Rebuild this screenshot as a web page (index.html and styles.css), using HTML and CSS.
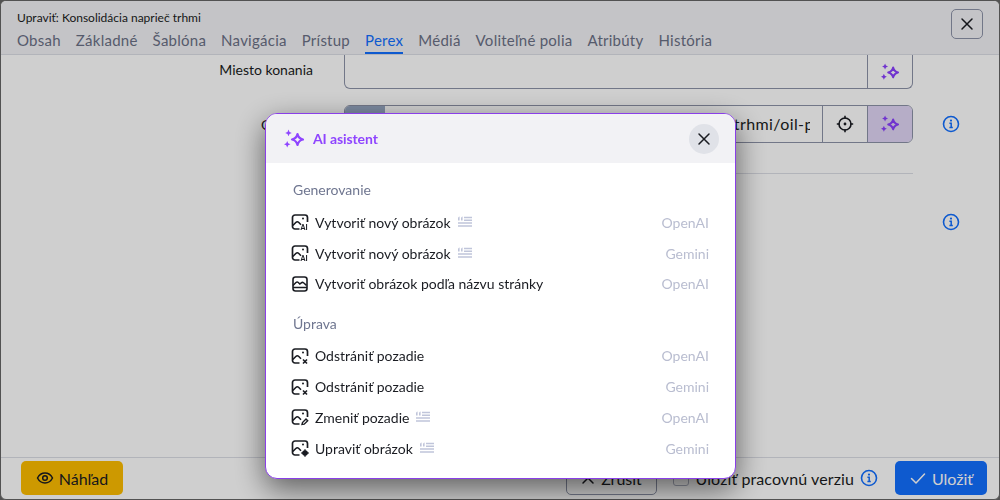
FILE: index.html
```html
<!DOCTYPE html>
<html>
<head>
  <title>Upraviť: Konsolidácia naprieč trhmi</title>
  <link rel="stylesheet" href="styles.css">
</head>
<body>
  <!-- Icon sprite -->
  <svg class="sprite" xmlns="http://www.w3.org/2000/svg">
    <symbol id="i-sparkle" viewBox="0 0 20 20">
      <path d="M13.500 5Q14.500 9.500 19 10.500 14.500 11.500 13.500 16 12.500 11.500 8 10.500 12.500 9.500 13.500 5z" fill="none" stroke="currentColor" stroke-width="2.200" stroke-linejoin="round"/>
      <path d="M4.500 .6l1 2.300 2.300 1-2.300 1-1 2.300-1-2.300-2.300-1 2.300-1zM3.200 12l1 2.300 2.300 1-2.300 1-1 2.300-1-2.300-2.300-1 2.300-1z" fill="currentColor"/>
    </symbol>
    <symbol id="i-close" viewBox="0 0 16 16">
      <path d="M3 3l10 10M13 3L3 13" fill="none" stroke="currentColor" stroke-width="1.500" stroke-linecap="round"/>
    </symbol>
    <symbol id="i-info" viewBox="0 0 18 18">
      <circle cx="9" cy="9" r="7.500" fill="none" stroke="currentColor" stroke-width="1.600"/>
      <circle cx="9" cy="5.600" r="1.100" fill="currentColor"/>
      <path d="M7.400 8.200H9.200V12.500M7.400 12.600h3.400" fill="none" stroke="currentColor" stroke-width="1.500"/>
    </symbol>
    <symbol id="i-target" viewBox="0 0 18 18">
      <circle cx="9" cy="9" r="6" fill="none" stroke="currentColor" stroke-width="1.600"/>
      <circle cx="9" cy="9" r="1.400" fill="currentColor"/>
      <path d="M9 .8v3M9 14.200v3M.8 9h3M14.200 9h3" stroke="currentColor" stroke-width="1.600"/>
    </symbol>
    <symbol id="i-quote" viewBox="0 0 16 12">
      <path d="M1 4.500V2.500C1 1.500 1.500 1 2.600 .6v3.900zM4 4.500V2.500C4 1.500 4.500 1 5.600 .6v3.900z" fill="currentColor"/>
      <path d="M7 1.500h8M7 4.200h8M1 7h14M1 10h14" stroke="currentColor" stroke-width="1.400"/>
    </symbol>
    <symbol id="i-image" viewBox="0 0 18 18">
      <path d="M8.500 16H4a2.500 2.500 0 0 1-2.500-2.500v-9A2.500 2.500 0 0 1 4 2h10a2.500 2.500 0 0 1 2.500 2.500V9" fill="none" stroke="currentColor" stroke-width="1.700"/>
      <path d="M1.800 12.500l3-3c1-1 2-1 3 0l2.200 2.200" fill="none" stroke="currentColor" stroke-width="1.600"/>
      <circle cx="12" cy="5.500" r="1" fill="currentColor"/>
    </symbol>
  </svg>

  <!-- Edit window behind the dialog -->
  <div class="editor">
    <header class="editor-head">
      <div class="head-text">
        <div class="editor-title">Upraviť: Konsolidácia naprieč trhmi</div>
        <nav class="tabs">
          <a>Obsah</a>
          <a>Základné</a>
          <a>Šablóna</a>
          <a>Navigácia</a>
          <a>Prístup</a>
          <a class="active">Perex</a>
          <a>Médiá</a>
          <a>Voliteľné polia</a>
          <a>Atribúty</a>
          <a>História</a>
        </nav>
      </div>
      <button class="btn-close"><svg class="icon-16"><use href="#i-close"/></svg></button>
    </header>

    <main class="editor-body">
      <div class="field field-first">
        <label>Miesto konania</label>
        <div class="input-group cut-top">
          <div class="input-text"></div>
          <button class="addon magic"><svg class="icon-18"><use href="#i-sparkle"/></svg></button>
        </div>
        <span class="field-info"></span>
      </div>

      <div class="field field-image">
        <label>Obrázok</label>
        <div class="input-group">
          <span class="prefix"></span>
          <div class="input-text"><span class="path">/images/perex/konsolidacia-naprieč-trhmi/oil-price</span></div>
          <button class="addon"><svg class="icon-18"><use href="#i-target"/></svg></button>
          <button class="addon magic on"><svg class="icon-18"><use href="#i-sparkle"/></svg></button>
        </div>
        <svg class="field-info icon-18"><use href="#i-info"/></svg>
      </div>

      <div class="field field-rule">
        <span></span>
        <hr>
        <span class="field-info"></span>
      </div>

      <div class="field field-last">
        <span></span>
        <span></span>
        <svg class="field-info icon-18"><use href="#i-info"/></svg>
      </div>
    </main>

    <footer class="editor-foot">
      <button class="btn btn-preview"><svg class="icon-18" viewBox="0 0 18 18"><path d="M1.500 9C3.200 5.700 5.800 4 9 4s5.800 1.700 7.500 5c-1.700 3.300-4.300 5-7.500 5S3.200 12.300 1.500 9z" fill="none" stroke="currentColor" stroke-width="1.500"/><circle cx="9" cy="9" r="2.300" fill="none" stroke="currentColor" stroke-width="1.500"/></svg>Náhľad</button>
      <div class="foot-right">
        <button class="btn btn-cancel"><svg class="icon-16"><use href="#i-close"/></svg>Zrušiť</button>
        <label class="check"><span class="check-box"></span>Uložiť pracovnú verziu</label>
        <svg class="icon-18 info-blue"><use href="#i-info"/></svg>
        <button class="btn btn-save"><svg class="icon-18" viewBox="0 0 18 18"><path d="M2.500 9.500l4.500 4.500 8.500-9" fill="none" stroke="currentColor" stroke-width="1.500" stroke-linecap="round" stroke-linejoin="round"/></svg>Uložiť</button>
      </div>
    </footer>
  </div>

  <!-- AI assistant dialog -->
  <div class="backdrop">
    <section class="dialog">
      <div class="dialog-head">
        <svg class="icon-20"><use href="#i-sparkle"/></svg>
        <h2>AI asistent</h2>
        <button class="dialog-close"><svg class="icon-16"><use href="#i-close"/></svg></button>
      </div>
      <div class="dialog-body">
        <h3>Generovanie</h3>
        <ul class="actions">
          <li>
            <svg class="icon-18" viewBox="0 0 18 18"><use href="#i-image" width="18" height="18"/><text x="9.500" y="16.800" class="badge-text">AI</text></svg>
            <span>Vytvoriť nový obrázok</span>
            <svg class="quote"><use href="#i-quote"/></svg>
            <em>OpenAI</em>
          </li>
          <li>
            <svg class="icon-18" viewBox="0 0 18 18"><use href="#i-image" width="18" height="18"/><text x="9.500" y="16.800" class="badge-text">AI</text></svg>
            <span>Vytvoriť nový obrázok</span>
            <svg class="quote"><use href="#i-quote"/></svg>
            <em>Gemini</em>
          </li>
          <li>
            <svg class="icon-18" viewBox="0 0 18 18"><rect x="2" y="2" width="14" height="14" rx="2.500" fill="none" stroke="currentColor" stroke-width="1.600"/><path d="M2 10.500l3-3c.8-.8 1.500-.8 2.300 0l1.500 1.500 1.500-1.200c.8-.6 1.500-.6 2.200 0l3 2.500M2 12.500h14" fill="none" stroke="currentColor" stroke-width="1.500"/></svg>
            <span>Vytvoriť obrázok podľa názvu stránky</span>
            <em>OpenAI</em>
          </li>
        </ul>

        <h3>Úprava</h3>
        <ul class="actions">
          <li>
            <svg class="icon-18" viewBox="0 0 18 18"><use href="#i-image" width="18" height="18"/><path d="M12 12.500l4 4M16 12.500l-4 4" stroke="currentColor" stroke-width="1.600"/></svg>
            <span>Odstrániť pozadie</span>
            <em>OpenAI</em>
          </li>
          <li>
            <svg class="icon-18" viewBox="0 0 18 18"><use href="#i-image" width="18" height="18"/><path d="M12 12.500l4 4M16 12.500l-4 4" stroke="currentColor" stroke-width="1.600"/></svg>
            <span>Odstrániť pozadie</span>
            <em>Gemini</em>
          </li>
          <li>
            <svg class="icon-18" viewBox="0 0 18 18"><use href="#i-image" width="18" height="18"/><path d="M11 16.500l.5-2 3.500-3.500 1.700 1.700-3.500 3.500z" fill="none" stroke="currentColor" stroke-width="1.400"/></svg>
            <span>Zmeniť pozadie</span>
            <svg class="quote"><use href="#i-quote"/></svg>
            <em>OpenAI</em>
          </li>
          <li>
            <svg class="icon-18" viewBox="0 0 18 18"><use href="#i-image" width="18" height="18"/><circle cx="14" cy="14" r="2.800" fill="currentColor"/><path d="M14 10.300v7.400M10.300 14h7.400" stroke="currentColor" stroke-width="1.300"/></svg>
            <span>Upraviť obrázok</span>
            <svg class="quote"><use href="#i-quote"/></svg>
            <em>Gemini</em>
          </li>
        </ul>
      </div>
    </section>
  </div>
</body>
</html>
```

FILE: styles.css
```css
* {
  box-sizing: border-box;
}

html,
body {
  height: 100%;
}

body {
  margin: 0;
  background-color: #666;
  font-family: "Lato", sans-serif;
  font-size: 14px;
  color: #1a1c22;
  overflow: hidden;
}

button {
  font: inherit;
  color: inherit;
  cursor: pointer;
}

.sprite {
  display: none;
}

.icon-16 {
  width: 16px;
  height: 16px;
}

.icon-18 {
  width: 18px;
  height: 18px;
}

.icon-20 {
  width: 20px;
  height: 20px;
}

/* Edit window */
.editor {
  height: 500px;
  display: flex;
  flex-direction: column;
  background-color: #fff;
  border: 1px solid #666;
  border-radius: 6px;
  overflow: hidden;
}

.editor-head {
  height: 54px;
  flex: none;
  display: flex;
  justify-content: space-between;
  padding: 8px 16px 0;
  background-color: #f2f2f5;
  border-bottom: 1px solid #dcdee6;
}

.editor-title {
  font-size: 12px;
  line-height: 18px;
}

.tabs {
  display: flex;
  gap: 15px;
  margin-top: 2px;
}

.tabs a {
  font-size: 15px;
  letter-spacing: 0.25px;
  line-height: 22px;
  height: 25px;
  color: #6b7086;
}

.tabs a.active {
  color: #126fff;
  border-bottom: 2px solid #126fff;
}

.btn-close {
  width: 32px;
  height: 30px;
  display: flex;
  align-items: center;
  justify-content: center;
  background: none;
  border: 1px solid #8d93a8;
  border-radius: 5px;
}

.editor-body {
  flex: 1;
  padding-right: 30px;
  overflow: hidden;
}

.field {
  display: grid;
  grid-template-columns: 312px 569px 56px;
  column-gap: 31px;
  align-items: center;
}

.field label {
  text-align: right;
}

.field-info {
  margin-left: -2px;
  color: #126fff;
  justify-self: start;
}

.field-first {
  height: 34px;
}

.field-first label {
  margin-bottom: 6px;
}

.field-image {
  margin-top: 16px;
}

.field-rule {
  margin-top: 30px;
}

.field-rule hr {
  width: 100%;
  margin: 0;
  border: 0;
  border-top: 1px solid #dcdee6;
}

.field-last {
  margin-top: 39px;
}

.input-group {
  height: 38px;
  display: flex;
  border: 1px solid #8d93a8;
  border-radius: 6px;
  overflow: hidden;
}

.input-group.cut-top {
  height: 34px;
  border-top: 0;
  border-top-left-radius: 0;
  border-top-right-radius: 0;
}

.prefix {
  width: 40px;
  flex: none;
  background-color: #98a9c4;
}

/* the value is longer than the box, only its tail shows */
.input-text {
  flex: 1;
  min-width: 0;
  display: flex;
  justify-content: flex-end;
  margin-right: 12px;
  line-height: 36px;
  font-size: 16px;
  white-space: nowrap;
  overflow: hidden;
}

.path {
  flex: none;
  margin-right: -31px;
  letter-spacing: 0.4px;
}

.addon {
  width: 45px;
  flex: none;
  display: flex;
  align-items: center;
  justify-content: center;
  padding: 0;
  background: none;
  border: 0;
  border-left: 1px solid #8d93a8;
}

.magic {
  color: #8a3fff;
}

.magic.on {
  background-color: #e0d5f5;
}

/* Footer */
.editor-foot {
  height: 42px;
  flex: none;
  display: flex;
  justify-content: space-between;
  align-items: flex-start;
  padding: 3px 12px 0 20px;
  border-top: 1px solid #dcdee6;
}

.foot-right {
  display: flex;
  align-items: center;
}

.btn {
  height: 34px;
  display: flex;
  align-items: center;
  justify-content: center;
  gap: 5px;
  font-size: 16px;
  border: 0;
  border-radius: 5px;
}

.btn-preview {
  width: 102px;
  background-color: #fdbd00;
}

.btn-cancel {
  width: 91px;
  background: none;
  border: 1px solid #8d93a8;
}

.btn-save {
  width: 92px;
  margin-left: 17px;
  background-color: #126fff;
  color: #fff;
}

.check {
  display: flex;
  align-items: center;
  gap: 7px;
  margin-left: 16px;
  font-size: 16px;
  letter-spacing: 0.1px;
}

.check-box {
  width: 16px;
  height: 16px;
  border: 1px solid #aeb2c2;
  border-radius: 3px;
}

.info-blue {
  margin-left: 6px;
  color: #126fff;
}

/* Dialog */
.backdrop {
  position: fixed;
  inset: 0;
  padding: 113px 0 0 265px;
  background-color: rgba(0, 0, 0, 0.19);
}

.dialog {
  width: 471px;
  height: 366px;
  background-color: #fff;
  border: 1px solid #8a3fe8;
  border-radius: 12px;
  box-shadow: 0 10px 30px rgba(0, 0, 0, 0.55);
  overflow: hidden;
}

.dialog-head {
  height: 49px;
  display: flex;
  align-items: center;
  gap: 9px;
  padding: 0 16px 0 18px;
  background-color: #f2f2f5;
  color: #8f45ff;
}

.dialog-head h2 {
  flex: 1;
  margin: 0;
  padding-bottom: 1px;
  font-size: 14px;
  font-weight: 700;
  letter-spacing: -0.1px;
}

.dialog-close {
  width: 30px;
  height: 30px;
  display: flex;
  align-items: center;
  justify-content: center;
  padding: 0;
  border: 0;
  border-radius: 50%;
  background-color: #e0e2e8;
  color: #1a1c22;
}

.dialog-body {
  padding: 18px 26px 0 25px;
}

.dialog-body h3 {
  margin: 0;
  padding-left: 2px;
  font-size: 14px;
  font-weight: 400;
  line-height: 18px;
  color: #6f7690;
}

.actions {
  list-style: none;
  margin: 8px 0 16px;
  padding: 0;
}

.actions:last-child {
  margin-top: 7px;
}

.actions li {
  height: 30.8px;
  display: flex;
  align-items: center;
  gap: 6px;
}

.actions em {
  margin-left: auto;
  font-style: normal;
  color: #b9bdd0;
}

.quote {
  width: 16px;
  height: 12px;
  color: #c0c5da;
}

.badge-text {
  font-family: "Lato", sans-serif;
  font-size: 7px;
  font-weight: 900;
  fill: currentColor;
}
```
